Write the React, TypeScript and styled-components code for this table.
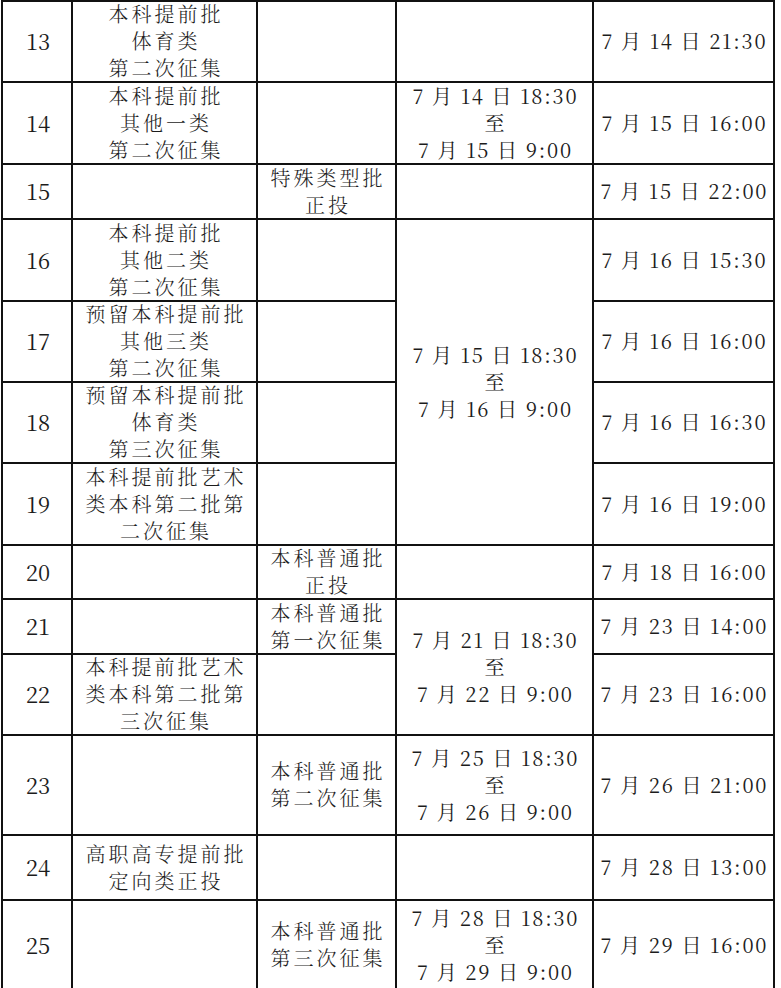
import React from "react";
import styled, { createGlobalStyle } from "styled-components";

const Global = createGlobalStyle`
  html, body { margin: 0; padding: 0; background: #ffffff; }
  body { overflow: hidden; }
`;

const Grid = styled.div`
  display: grid;
  grid-template-columns: 70px 185px 139px 197px 181px;
  grid-template-rows: 81px 82px 55px 82px 81px 81px 82px 54px 55px 81px 100px 65px 90px;
  width: max-content;
  margin-left: 1px;
  border-top: 2px solid #111;
  border-left: 2px solid #111;
  font-family: "Noto Serif CJK SC", "Liberation Serif", serif;
  color: #1c1c1c;
`;

const Cell = styled.div<{ $row: number; $col: number; $span?: number }>`
  grid-row: ${(p) => p.$row} / span ${(p) => p.$span ?? 1};
  grid-column: ${(p) => p.$col};
  box-sizing: border-box;
  border-right: 2px solid #111;
  border-bottom: 2px solid #111;
  padding-bottom: 2px;
  display: flex;
  flex-direction: column;
  align-items: center;
  justify-content: center;
  text-align: center;
  white-space: pre;
`;

const NumText = styled.span`
  font-size: 22px;
  line-height: 27px;
  padding-left: 2px;
`;

const Line = styled.span`
  font-size: 20px;
  font-weight: 300;
  line-height: 27px;
  letter-spacing: 3px;
  padding-left: 3px;
`;

const DateLine = styled.span`
  font-size: 20px;
  line-height: 27px;
  letter-spacing: 1.75px;
  padding-left: 1.75px;
`;

type Row = { n: number; a?: string[]; b?: string[]; end: string };

const rows: Row[] = [
  { n: 13, a: ["本科提前批", "体育类", "第二次征集"], end: "7 月 14 日 21:30" },
  { n: 14, a: ["本科提前批", "其他一类", "第二次征集"], end: "7 月 15 日 16:00" },
  { n: 15, b: ["特殊类型批", "正投"], end: "7 月 15 日 22:00" },
  { n: 16, a: ["本科提前批", "其他二类", "第二次征集"], end: "7 月 16 日 15:30" },
  { n: 17, a: ["预留本科提前批", "其他三类", "第二次征集"], end: "7 月 16 日 16:00" },
  { n: 18, a: ["预留本科提前批", "体育类", "第三次征集"], end: "7 月 16 日 16:30" },
  { n: 19, a: ["本科提前批艺术", "类本科第二批第", "二次征集"], end: "7 月 16 日 19:00" },
  { n: 20, b: ["本科普通批", "正投"], end: "7 月 18 日 16:00" },
  { n: 21, b: ["本科普通批", "第一次征集"], end: "7 月 23 日 14:00" },
  { n: 22, a: ["本科提前批艺术", "类本科第二批第", "三次征集"], end: "7 月 23 日 16:00" },
  { n: 23, b: ["本科普通批", "第二次征集"], end: "7 月 26 日 21:00" },
  { n: 24, a: ["高职高专提前批", "定向类正投"], end: "7 月 28 日 13:00" },
  { n: 25, b: ["本科普通批", "第三次征集"], end: "7 月 29 日 16:00" },
];

type Period = { row: number; span: number; lines: string[] };

const periods: Period[] = [
  { row: 1, span: 1, lines: [] },
  { row: 2, span: 1, lines: ["7 月 14 日 18:30", "至", "7 月 15 日 9:00"] },
  { row: 3, span: 1, lines: [] },
  { row: 4, span: 4, lines: ["7 月 15 日 18:30", "至", "7 月 16 日 9:00"] },
  { row: 8, span: 1, lines: [] },
  { row: 9, span: 2, lines: ["7 月 21 日 18:30", "至", "7 月 22 日 9:00"] },
  { row: 11, span: 1, lines: ["7 月 25 日 18:30", "至", "7 月 26 日 9:00"] },
  { row: 12, span: 1, lines: [] },
  { row: 13, span: 1, lines: ["7 月 28 日 18:30", "至", "7 月 29 日 9:00"] },
];

export default function App() {
  return (
    <>
      <Global />
      <Grid>
        {rows.map((r, i) => (
          <React.Fragment key={r.n}>
            <Cell $row={i + 1} $col={1}>
              <NumText>{r.n}</NumText>
            </Cell>
            <Cell $row={i + 1} $col={2}>
              {(r.a ?? []).map((t) => (
                <Line key={t}>{t}</Line>
              ))}
            </Cell>
            <Cell $row={i + 1} $col={3}>
              {(r.b ?? []).map((t) => (
                <Line key={t}>{t}</Line>
              ))}
            </Cell>
            <Cell $row={i + 1} $col={5}>
              <DateLine>{r.end}</DateLine>
            </Cell>
          </React.Fragment>
        ))}
        {periods.map((p) => (
          <Cell key={p.row} $row={p.row} $col={4} $span={p.span}>
            {p.lines.map((t) => (
              <DateLine key={t}>{t}</DateLine>
            ))}
          </Cell>
        ))}
      </Grid>
    </>
  );
}
